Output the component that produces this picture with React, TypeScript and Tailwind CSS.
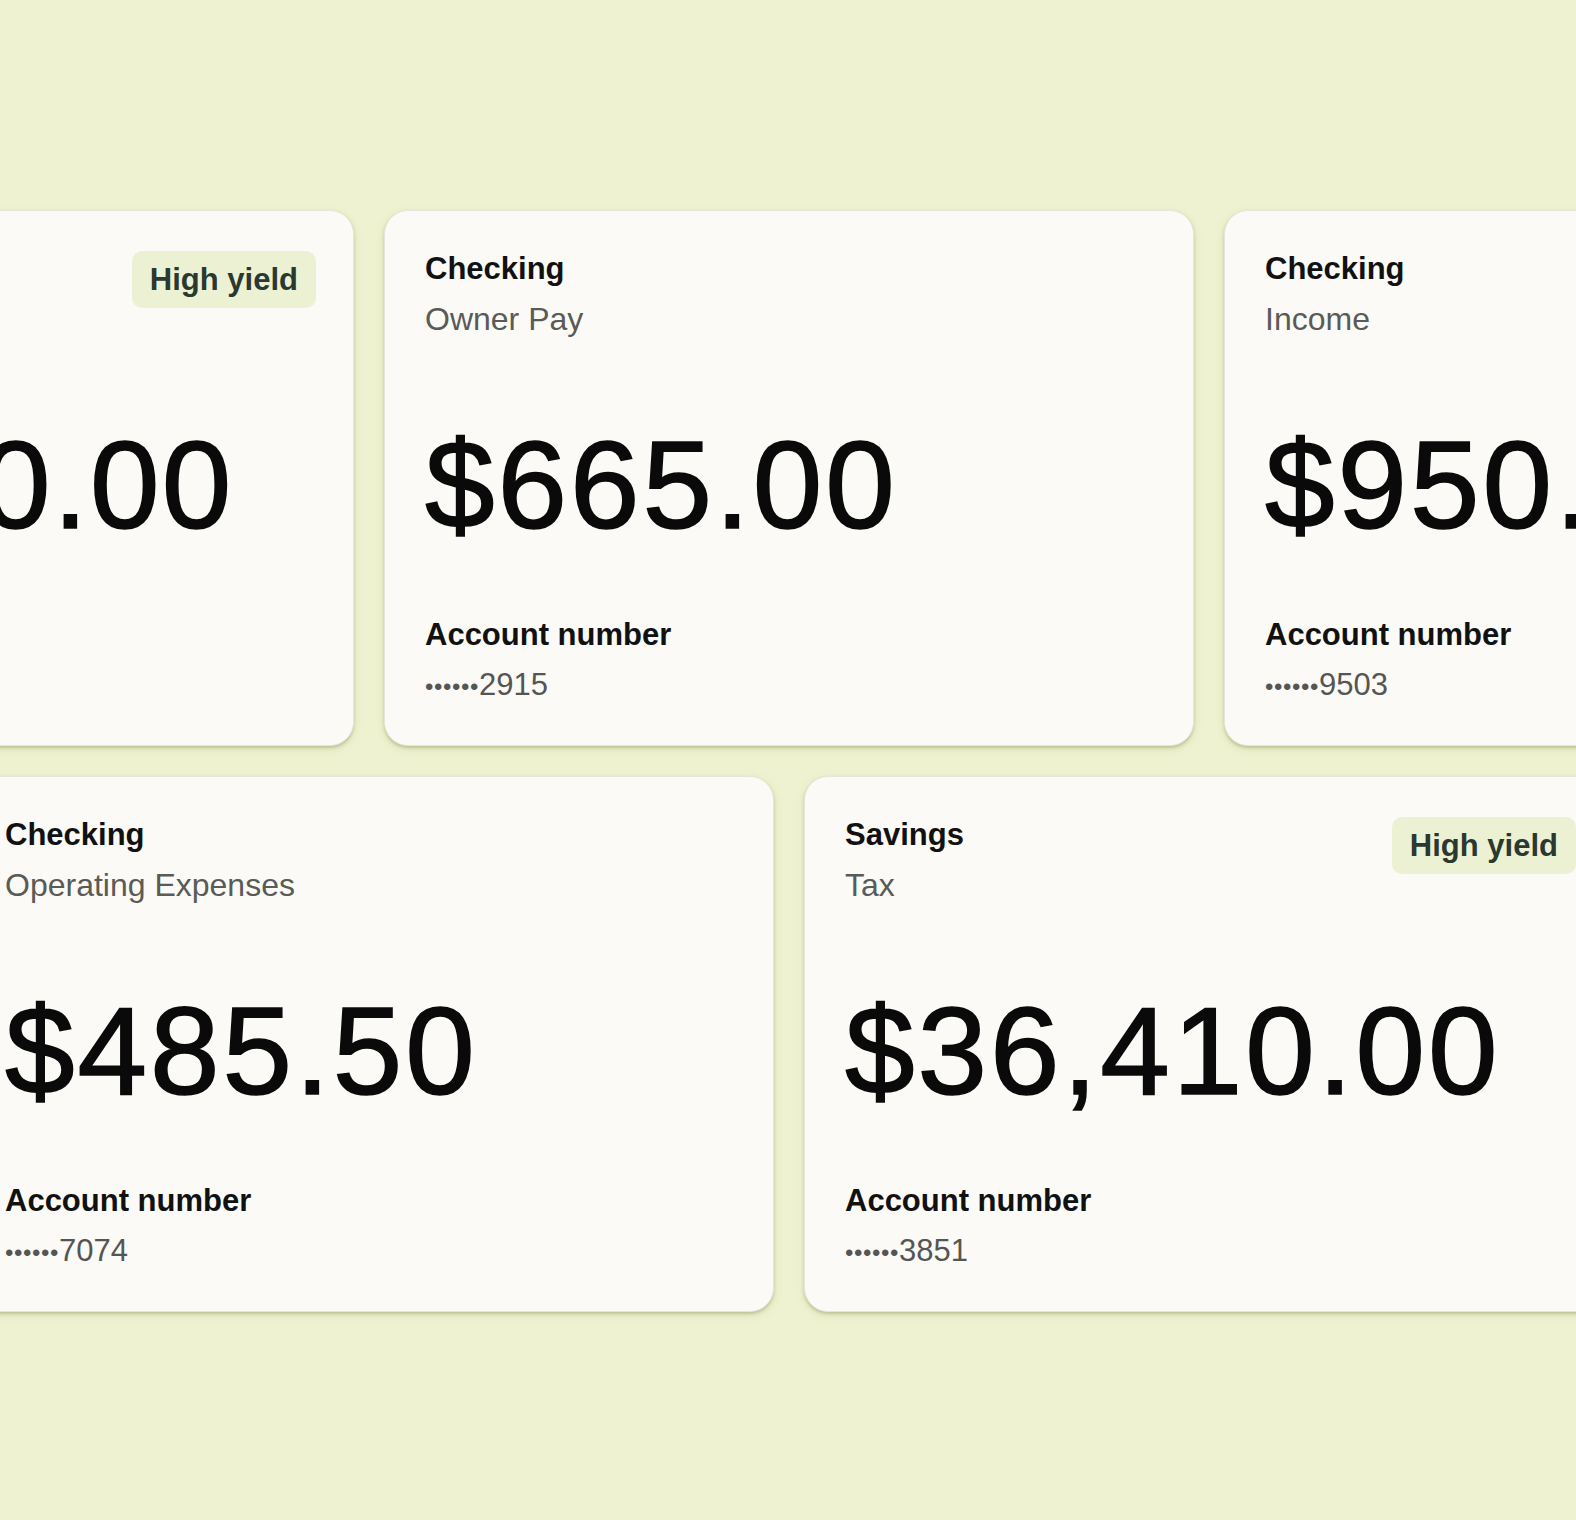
import React from "react";

type Card = {
  kind: string;
  name: string;
  amount: string;
  last4: string;
  highYield?: boolean;
  tight?: boolean;
};

const top: Card[] = [
  { kind: "Savings", name: "Reserve", amount: "$12,840.00", last4: "4418", highYield: true, tight: true },
  { kind: "Checking", name: "Owner Pay", amount: "$665.00", last4: "2915" },
  { kind: "Checking", name: "Income", amount: "$950.00", last4: "9503" },
];

const bottom: Card[] = [
  { kind: "Checking", name: "Operating Expenses", amount: "$485.50", last4: "7074" },
  { kind: "Savings", name: "Tax", amount: "$36,410.00", last4: "3851", highYield: true },
];

function AccountCard({ c }: { c: Card }) {
  return (
    <div className="w-[810px] h-[536px] shrink-0 rounded-[24px] bg-[#fbfaf7] border border-[#e7e6dc] shadow-[0_2px_3px_rgba(150,155,100,0.45),0_3px_10px_rgba(150,160,90,0.18)] pl-[40px] pr-[37px] pt-[40px] flex flex-col">
      <div className="flex justify-between items-start">
        <div className="flex flex-col">
          <div className="text-[31px] leading-[36px] font-bold text-[#111111]">{c.kind}</div>
          <div className="mt-[14px] text-[32px] leading-[36px] text-[#5a5a56]">{c.name}</div>
        </div>
        {c.highYield && (
          <div className="rounded-[10px] bg-[#ecf1d3] px-[18px] py-[11px] text-[31px] leading-[35px] font-bold text-[#2b382f]">
            High yield
          </div>
        )}
      </div>
      <div
        className={
          c.tight
            ? "mt-[85px] text-[125px] leading-[125px] tracking-[2.3px] text-[#0a0a0a] whitespace-nowrap [-webkit-text-stroke:1.6px_#0a0a0a]"
            : "mt-[85px] text-[125px] leading-[125px] tracking-[3px] text-[#0a0a0a] whitespace-nowrap [-webkit-text-stroke:1.6px_#0a0a0a]"
        }
      >
        {c.amount}
      </div>
      <div className="mt-[70px] text-[31px] leading-[36px] font-bold text-[#111111]">Account number</div>
      <div className="mt-[14px] leading-[36px] text-[#555553] whitespace-nowrap">
        <span className="text-[24px] tracking-[0.6px]">••••••</span>
        <span className="text-[31px]">{c.last4}</span>
      </div>
    </div>
  );
}

export default function App() {
  return (
    <div
      className="w-[1576px] h-[1520px] overflow-hidden bg-[#eef2d1] pt-[210px]"
      style={{ fontFamily: '"Liberation Sans", Arial, sans-serif' }}
    >
      <div className="flex gap-[30px] ml-[-456px]">
        {top.map((c, i) => (
          <AccountCard key={i} c={c} />
        ))}
      </div>
      <div className="flex gap-[30px] ml-[-36px] mt-[30px]">
        {bottom.map((c, i) => (
          <AccountCard key={i} c={c} />
        ))}
      </div>
    </div>
  );
}
